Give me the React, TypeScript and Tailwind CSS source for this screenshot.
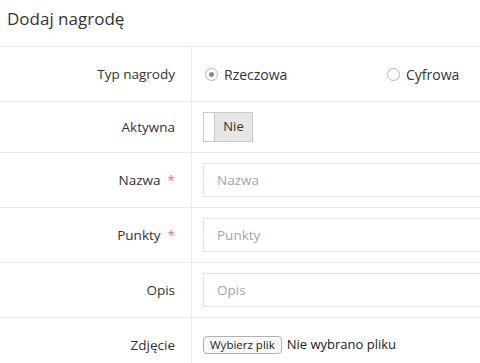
const FONT = "font-['Open_Sans',_'Noto_Sans',_sans-serif]"

function Row({ label, required, h = 'h-[55px]', children }: { label: string; required?: boolean; h?: string; children: React.ReactNode }) {
  return (
    <div className={`grid grid-cols-[192px_1fr] border-b border-[#ebebeb] ${h}`}>
      <div className="flex items-center justify-end border-r border-[#ebebeb] pr-4 text-[13.5px] text-[#333]">
        {label}
        {required && <span className="ml-[7px] text-[#e36e6e]">*</span>}
      </div>
      <div className="flex items-center pl-[11px]">{children}</div>
    </div>
  )
}

function Radio({ checked, label }: { checked?: boolean; label: string }) {
  return (
    <label className="flex items-center gap-[6px] text-[14px] text-[#333]">
      <span className="flex h-[13px] w-[13px] items-center justify-center rounded-full border border-[#b5b5b5] bg-white">
        {checked && <span className="h-[5px] w-[5px] rounded-full bg-[#8a8a8a]" />}
      </span>
      {label}
    </label>
  )
}

function TextInput({ placeholder }: { placeholder: string }) {
  return (
    <input
      placeholder={placeholder}
      className="h-[34px] w-[320px] shrink-0 border border-[#e3e3e3] px-[13px] text-[13.5px] text-[#333] placeholder:text-[#a6a6a6] outline-none"
    />
  )
}

export default function App() {
  return (
    <div className={`h-[363px] w-[480px] overflow-hidden bg-white ${FONT}`}>
      <div className="flex h-[47px] items-center border-b border-[#ebebeb] px-[7px] pb-[9px] text-[17px] text-[#333]">
        Dodaj nagrodę
      </div>

      <Row label="Typ nagrody" h="h-[55px]">
        <div className="flex items-center pl-[2px]">
          <div className="w-[182px]">
            <Radio checked label="Rzeczowa" />
          </div>
          <Radio label="Cyfrowa" />
        </div>
      </Row>

      <Row label="Aktywna" h="h-[51px]">
        <div className="flex h-[30px] w-[50px] border border-[#c9c9c9]">
          <div className="w-[11px] border-r border-[#c9c9c9] bg-white" />
          <div className="flex flex-1 items-center justify-center bg-[#e6e6e6] text-[13px] text-[#333]">Nie</div>
        </div>
      </Row>

      <Row label="Nazwa" required>
        <TextInput placeholder="Nazwa" />
      </Row>

      <Row label="Punkty" required>
        <TextInput placeholder="Punkty" />
      </Row>

      <Row label="Opis">
        <TextInput placeholder="Opis" />
      </Row>

      <Row label="Zdjęcie">
        <div className="flex items-center gap-[5px]">
          <button className="h-[18px] rounded-[4px] border border-[#b0b0b0] bg-[#fafafa] px-[6px] text-[11.5px] leading-none text-[#222]">
            Wybierz plik
          </button>
          <span className="text-[13px] text-[#222]">Nie wybrano pliku</span>
        </div>
      </Row>
    </div>
  )
}
